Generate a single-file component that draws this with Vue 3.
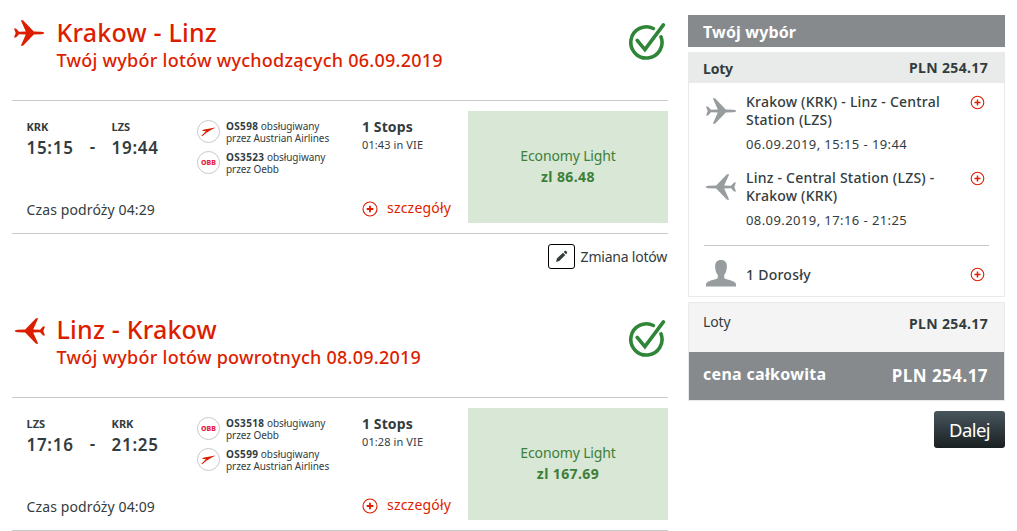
<script setup>
import { ref } from 'vue';

const legs = ref([
  {
    id: 'outbound',
    title: 'Krakow - Linz',
    subtitle: 'Twój wybór lotów wychodzących 06.09.2019',
    from: 'KRK',
    to: 'LZS',
    departure: '15:15',
    arrival: '19:44',
    duration: '04:29',
    stops: '1 Stops',
    layover: '01:43 in VIE',
    fare: 'Economy Light',
    price: 'zl 86.48',
    editable: true,
    flights: [
      { number: 'OS598', carrier: 'Austrian Airlines', logo: 'austrian' },
      { number: 'OS3523', carrier: 'Oebb', logo: 'obb' }
    ]
  },
  {
    id: 'return',
    title: 'Linz - Krakow',
    subtitle: 'Twój wybór lotów powrotnych 08.09.2019',
    from: 'LZS',
    to: 'KRK',
    departure: '17:16',
    arrival: '21:25',
    duration: '04:09',
    stops: '1 Stops',
    layover: '01:28 in VIE',
    fare: 'Economy Light',
    price: 'zl 167.69',
    editable: false,
    flights: [
      { number: 'OS3518', carrier: 'Oebb', logo: 'obb' },
      { number: 'OS599', carrier: 'Austrian Airlines', logo: 'austrian' }
    ]
  }
]);

const trips = [
  { id: 'outbound', name: 'Krakow (KRK) - Linz - Central Station (LZS)', date: '06.09.2019, 15:15 - 19:44' },
  { id: 'return', name: 'Linz - Central Station (LZS) - Krakow (KRK)', date: '08.09.2019, 17:16 - 21:25' }
];

const total = 'PLN 254.17';

const planePath = 'M0 8.6 L2 8.6 L5 11.8 L11.8 11.6 L6.8 0.2 L9 0.2 L19.8 11.5 L27.5 11.8 Q30.3 12.1 30.3 13 Q30.3 13.9 27.5 14.2 L19.8 14.5 L9 25.8 L6.8 25.8 L11.8 14.4 L5 14.2 L2 17.4 L0 17.4 L1.7 13 Z';
</script>

<template>
  <div class="page">
    <main class="legs">
      <section v-for="leg in legs" :key="leg.id" class="leg">
        <header class="leg-header">
          <svg class="plane" :class="{ back: leg.id === 'return' }" viewBox="0 0 31 26">
            <path :d="planePath" />
          </svg>
          <div class="leg-titles">
            <h2 class="leg-title">{{ leg.title }}</h2>
            <h3 class="leg-subtitle">{{ leg.subtitle }}</h3>
          </div>
          <svg class="check" viewBox="0 0 38 38">
            <path d="M25.4 5.5 A15.6 15.6 0 1 0 33 13.9" />
            <path d="M9.2 17.3 L16.9 26.6 L35.4 1.9" />
          </svg>
        </header>

        <div class="leg-body">
          <div class="times">
            <div class="times-row">
              <div class="stop">
                <span class="code">{{ leg.from }}</span>
                <span class="time">{{ leg.departure }}</span>
              </div>
              <span class="dash">-</span>
              <div class="stop">
                <span class="code">{{ leg.to }}</span>
                <span class="time">{{ leg.arrival }}</span>
              </div>
            </div>
            <p class="duration">Czas podróży {{ leg.duration }}</p>
          </div>

          <ul class="flights">
            <li v-for="flight in leg.flights" :key="flight.number" class="flight">
              <span class="carrier-logo">
                <svg v-if="flight.logo === 'austrian'" viewBox="0 0 16 10">
                  <path d="M0.3 9.3 L5.2 4.1 L1.2 3.6 Q1.2 2.6 3.5 2.4 L15.6 0.2 L9.3 3.6 Q7.6 4.6 5.8 5.8 L1.4 9.6 Z" />
                </svg>
                <span v-else class="obb">OBB</span>
              </span>
              <p class="flight-text"><b>{{ flight.number }}</b> obsługiwany<br>przez {{ flight.carrier }}</p>
            </li>
          </ul>

          <div class="stops">
            <p class="stops-count">{{ leg.stops }}</p>
            <p class="layover">{{ leg.layover }}</p>
            <a class="details">
              <svg class="plus" viewBox="0 0 16 16">
                <circle cx="8" cy="8" r="7" />
                <path d="M8 4.7 V11.3 M4.7 8 H11.3" />
              </svg>
              <span>szczegóły</span>
            </a>
          </div>

          <div class="fare">
            <span class="fare-name">{{ leg.fare }}</span>
            <span class="fare-price">{{ leg.price }}</span>
          </div>
        </div>

        <div v-if="leg.editable" class="change">
          <button class="change-btn">
            <svg viewBox="0 0 14 14">
              <path d="M1.2 12.8 L2 9.2 L8.6 2.9 L11.1 5.4 L4.6 11.9 Z M9.3 2.2 L10.6 1 Q11.3 0.6 12 1.2 L12.8 2 Q13.4 2.7 12.9 3.4 L11.8 4.7 Z" />
            </svg>
          </button>
          <span class="change-label">Zmiana lotów</span>
        </div>
      </section>
    </main>

    <aside class="summary">
      <h2 class="summary-title">Twój wybór</h2>

      <div class="panel">
        <div class="panel-head">
          <span class="panel-label">Loty</span>
          <span class="amount">{{ total }}</span>
        </div>
        <div class="panel-body">
          <div v-for="trip in trips" :key="trip.id" class="trip">
            <svg class="trip-icon" :class="{ back: trip.id === 'return' }" viewBox="0 0 31 26">
              <path :d="planePath" />
            </svg>
            <div class="trip-text">
              <p class="trip-name">{{ trip.name }}</p>
              <p class="trip-date">{{ trip.date }}</p>
            </div>
            <svg class="plus small" viewBox="0 0 15 15">
              <circle cx="7.5" cy="7.5" r="6.3" />
              <path d="M7.5 4.5 V10.5 M4.5 7.5 H10.5" />
            </svg>
          </div>
          <div class="passengers">
            <svg class="person" viewBox="0 0 30 27">
              <path d="M15 0 C19 0 21 2.4 20.9 6.5 C20.8 10 20 13 18.2 15 L18.2 18 C20 20 29 20.3 30 24 L30 26.6 L0 26.6 L0 24 C1 20.3 10 20 11.8 18 L11.8 15 C10 13 9.2 10 9.1 6.5 C9 2.4 11 0 15 0 Z" />
            </svg>
            <p class="passenger-label">1 Dorosły</p>
            <svg class="plus small" viewBox="0 0 15 15">
              <circle cx="7.5" cy="7.5" r="6.3" />
              <path d="M7.5 4.5 V10.5 M4.5 7.5 H10.5" />
            </svg>
          </div>
        </div>
      </div>

      <div class="totals">
        <div class="subtotal">
          <span class="subtotal-label">Loty</span>
          <span class="amount">{{ total }}</span>
        </div>
        <div class="grand">
          <span class="grand-label">cena całkowita</span>
          <span class="grand-amount">{{ total }}</span>
        </div>
      </div>

      <button class="next-btn">Dalej</button>
    </aside>
  </div>
</template>

<style>
body {
  margin: 0;
  background: #fff;
  overflow: hidden;
}
</style>

<style scoped>
.page {
  display: flex;
  gap: 20px;
  width: 1017px;
  height: 531px;
  padding-left: 12px;
  box-sizing: border-box;
  overflow: hidden;
  font-family: 'Noto Sans', sans-serif;
  color: #333c3e;
}

h2,
h3,
p,
ul {
  margin: 0;
  padding: 0;
}

.legs {
  width: 656px;
  flex-shrink: 0;
}

.leg {
  height: 297px;
}

.leg-header {
  display: flex;
  align-items: flex-start;
  height: 100px;
  padding: 17px 2px 0 2px;
  box-sizing: border-box;
  color: #dc1e00;
}

.plane {
  width: 31px;
  height: 26px;
  margin: 3px 11.5px 0 0;
  fill: #dc1e00;
}

.plane.back {
  margin-top: 4px;
}

.back {
  transform: scaleX(-1);
}

.leg-titles {
  flex: 1;
}

.leg-title {
  font-size: 25px;
  font-weight: 500;
  line-height: 31px;
  letter-spacing: 0.2px;
}

.leg-subtitle {
  font-size: 18px;
  font-weight: 500;
  line-height: 24px;
  letter-spacing: 0.25px;
}

.check {
  width: 38px;
  height: 38px;
  margin-top: 6px;
  fill: none;
  stroke: #2f8538;
  stroke-width: 3.6;
  stroke-linecap: round;
}

.leg-body {
  display: flex;
  height: 132px;
  border-top: 1px solid #c8c8c8;
  border-bottom: 1px solid #c8c8c8;
}

.times {
  width: 170px;
  padding: 19px 0 0 14.5px;
  box-sizing: border-box;
}

.times-row {
  display: flex;
  align-items: flex-end;
}

.stop {
  display: flex;
  flex-direction: column;
}

.code {
  font-size: 11px;
  font-weight: 700;
  line-height: 14px;
}

.time {
  font-size: 17px;
  font-weight: 600;
  line-height: 22px;
  letter-spacing: 0.7px;
  margin-top: 3px;
}

.dash {
  width: 38px;
  font-size: 17px;
  font-weight: 600;
  line-height: 20px;
  padding-bottom: 2px;
  text-align: center;
}

.duration {
  font-size: 14px;
  line-height: 20px;
  letter-spacing: 0.12px;
  margin-top: 41px;
}

.flights {
  display: flex;
  flex-direction: column;
  gap: 7px;
  width: 165px;
  padding: 19px 0 0 15px;
  box-sizing: border-box;
  list-style: none;
}

.flight {
  display: flex;
  align-items: flex-start;
  gap: 6px;
}

.carrier-logo {
  display: flex;
  align-items: center;
  justify-content: center;
  width: 23px;
  height: 23px;
  margin-bottom: 1px;
  box-sizing: border-box;
  border: 1px solid #c8c8c8;
  border-radius: 50%;
}

.carrier-logo svg {
  width: 15px;
  height: 10px;
  fill: #dc1e00;
}

.obb {
  font-size: 7px;
  font-weight: 800;
  line-height: 9px;
  color: #e8203c;
}

.flight-text {
  font-size: 10px;
  line-height: 12px;
  letter-spacing: -0.07px;
}

.flight-text b {
  letter-spacing: 0.35px;
}

.stops {
  width: 121px;
  padding: 16px 0 0 15px;
  box-sizing: border-box;
}

.stops-count {
  font-size: 14px;
  font-weight: 700;
  line-height: 20px;
  letter-spacing: 0.1px;
}

.layover {
  font-size: 11px;
  line-height: 16px;
  letter-spacing: 0.1px;
}

.details {
  display: flex;
  align-items: center;
  gap: 9px;
  margin-top: 45px;
  font-size: 14px;
  line-height: 20px;
  letter-spacing: 0.2px;
  color: #dc1e00;
}

.plus {
  width: 16px;
  height: 16px;
  margin-top: 1px;
  fill: none;
  stroke: #dc1e00;
  stroke-width: 1.1;
}

.plus path {
  stroke-width: 1.8;
}

.plus.small {
  width: 15px;
  height: 15px;
  flex-shrink: 0;
}

.plus.small path {
  stroke-width: 1.5;
}

.fare {
  display: flex;
  flex-direction: column;
  align-items: center;
  justify-content: center;
  width: 200px;
  height: 112px;
  margin-top: 10px;
  padding-bottom: 2px;
  box-sizing: border-box;
  background: #d8e7d6;
  color: #3d8039;
  font-size: 14px;
  line-height: 21px;
}

.fare-name {
  letter-spacing: -0.15px;
}

.fare-price {
  font-weight: 700;
  letter-spacing: 0.4px;
}

.change {
  display: flex;
  align-items: center;
  justify-content: flex-end;
  gap: 6px;
  padding: 10px 1px 0 0;
}

.change-btn {
  display: flex;
  align-items: center;
  justify-content: center;
  width: 27px;
  height: 25px;
  padding: 0;
  background: #fff;
  border: 1px solid #000;
  border-radius: 3px;
}

.change-btn svg {
  width: 13px;
  height: 13px;
  fill: #333c3e;
}

.change-label {
  font-size: 14px;
  line-height: 20px;
  letter-spacing: -0.22px;
}

.summary {
  display: flex;
  flex-direction: column;
  width: 317px;
  padding-top: 15px;
}

.summary-title {
  height: 32px;
  padding-left: 15px;
  background: #868a8d;
  color: #fff;
  font-size: 16px;
  font-weight: 700;
  line-height: 34px;
  letter-spacing: 0.15px;
}

.panel {
  height: 245px;
  margin-top: 5px;
  box-sizing: border-box;
  border: 1px solid #e9ebea;
}

.panel-head {
  display: flex;
  justify-content: space-between;
  height: 30px;
  padding: 0 16px 0 14px;
  background: #e9ebea;
  font-size: 14px;
  font-weight: 700;
  line-height: 30px;
}

.panel-label {
  line-height: 32px;
  letter-spacing: -0.2px;
}

.amount {
  font-size: 14px;
  font-weight: 700;
  letter-spacing: 0.35px;
}

.panel-body {
  padding: 10px 15px 0;
}

.trip {
  display: flex;
  align-items: flex-start;
  height: 76px;
}

.trip-icon {
  width: 31px;
  height: 26px;
  margin: 5px 9px 0 2px;
  flex-shrink: 0;
  fill: #979d9f;
}

.trip-icon.back {
  margin: 5px 10px 0 1px;
}

.trip-text {
  flex: 1;
}

.trip-name {
  width: 205px;
  font-size: 14px;
  font-weight: 500;
  line-height: 18px;
  letter-spacing: 0.22px;
}

.trip-date {
  margin-top: 6px;
  font-size: 13px;
  line-height: 18px;
  letter-spacing: 0.42px;
}

.trip .plus {
  margin: 2px 4px 0 0;
}

.passengers {
  display: flex;
  align-items: center;
  padding-top: 14px;
  border-top: 1px solid #c8c8c8;
}

.person {
  width: 30px;
  height: 27px;
  margin: 0 10px 0 2px;
  fill: #979d9f;
}

.passenger-label {
  flex: 1;
  padding-top: 2px;
  font-size: 14px;
  font-weight: 500;
  line-height: 20px;
  letter-spacing: 0.25px;
}

.passengers .plus {
  margin: 2px 4px 0 0;
}

.totals {
  margin-top: 5px;
  border: 1px solid #e9ebea;
}

.subtotal {
  display: flex;
  justify-content: space-between;
  height: 49px;
  padding: 0 16px 0 14px;
  box-sizing: border-box;
  background: #f4f4f4;
  font-size: 14px;
  line-height: 42px;
}

.subtotal-label {
  line-height: 38px;
  letter-spacing: -0.1px;
}

.grand {
  display: flex;
  justify-content: space-between;
  height: 48px;
  padding: 0 16px 0 14px;
  background: #868a8d;
  color: #fff;
  font-weight: 700;
}

.grand-label {
  font-size: 16px;
  line-height: 45px;
  letter-spacing: 0.3px;
}

.grand-amount {
  font-size: 17px;
  line-height: 48px;
  letter-spacing: 0.45px;
}

.next-btn {
  align-self: flex-end;
  width: 71px;
  height: 37px;
  margin-top: 10px;
  padding: 0;
  border: none;
  border-radius: 3px;
  background: linear-gradient(#48565c, #1a2022);
  color: #fff;
  font-family: inherit;
  font-size: 18.5px;
  line-height: 37px;
  letter-spacing: -0.6px;
}
</style>
